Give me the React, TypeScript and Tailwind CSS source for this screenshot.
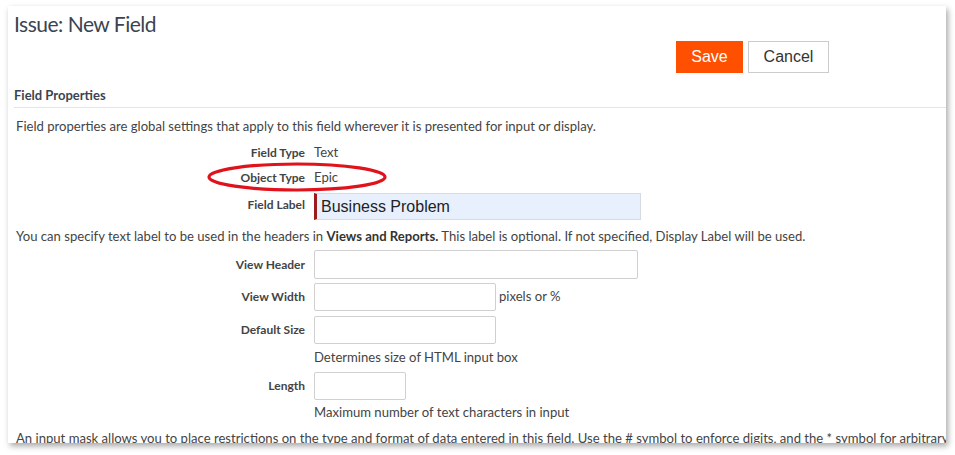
import React from "react";

const lato = { fontFamily: "Lato, 'Open Sans', sans-serif" } as const;

function Label({ children }: { children: React.ReactNode }) {
  return (
    <div className="w-[297px] shrink-0 text-right text-[12px] font-bold text-[#444]">{children}</div>
  );
}

export default function App() {
  return (
    <div className="w-[955px] h-[455px] bg-white overflow-hidden" style={lato}>
      <div className="ml-[8px] mt-[6px] w-[938px] h-[437px] overflow-hidden bg-white shadow-[2px_3px_6px_rgba(0,0,0,0.35)] relative">
        <div className="pl-[6px] pt-[5px] text-[21px] tracking-[-0.5px] leading-[26px] text-[#3b4450]">Issue: New Field</div>
        <div className="flex justify-end gap-[5px] pr-[117px] mt-[4px]">
          <button
            className="w-[67px] h-[32px] bg-[#fe5000] text-white text-[16px]"
            style={{ fontFamily: "'Liberation Sans', Arial, sans-serif" }}
          >
            Save
          </button>
          <button
            className="w-[81px] h-[32px] border border-[#ccc] bg-white text-[#333] text-[16px]"
            style={{ fontFamily: "'Liberation Sans', Arial, sans-serif" }}
          >
            Cancel
          </button>
        </div>
        <div className="ml-[6px] mt-[14px] pb-[4px] border-b border-[#e6e6e6] text-[13px] font-bold text-[#3b4450] leading-[16px]">
          Field Properties
        </div>
        <div className="pl-[8px] mt-[10px] text-[13.1px] text-[#444] leading-[17px]">
          Field properties are global settings that apply to this field wherever it is presented for input or display.
        </div>

        <div className="mt-[9px] flex items-center gap-[9px] h-[17px]">
          <Label>Field Type</Label>
          <div className="text-[13.1px] text-[#444]">Text</div>
        </div>
        <div className="mt-[8px] flex items-center gap-[9px] h-[17px]">
          <Label>Object Type</Label>
          <div className="text-[13.1px] text-[#444]">Epic</div>
        </div>
        <div className="mt-[7px] flex items-start gap-[9px]">
          <div className="pt-[3px]"><Label>Field Label</Label></div>
          <div
            className="w-[327px] h-[27px] bg-[#e8f0fe] border border-[#d5dbe3] border-l-[3px] border-l-[#9b1c1c] pl-[4px] flex items-center text-[16px] text-[#222]"
            style={{ fontFamily: "'Liberation Sans', Arial, sans-serif" }}
          >
            Business Problem
          </div>
        </div>
        <div className="pl-[8px] mt-[8px] text-[13.1px] text-[#444] leading-[17px] whitespace-nowrap">
          You can specify text label to be used in the headers in <b className="font-bold text-[#333]">Views and Reports.</b> This label is optional. If not specified, Display Label will be used.
        </div>

        <div className="mt-[5px] flex items-center gap-[9px]">
          <Label>View Header</Label>
          <div className="w-[324px] h-[29px] border border-[#d0d0d0] rounded-[2px]" />
        </div>
        <div className="mt-[4px] flex items-center gap-[9px]">
          <Label>View Width</Label>
          <div className="w-[182px] h-[28px] border border-[#d0d0d0] rounded-[2px]" />
          <div className="-ml-[6px] text-[13.1px] text-[#444]">pixels or %</div>
        </div>
        <div className="mt-[5px] flex items-center gap-[9px]">
          <Label>Default Size</Label>
          <div className="w-[182px] h-[28px] border border-[#d0d0d0] rounded-[2px]" />
        </div>
        <div className="pl-[306px] mt-[5px] text-[13.1px] text-[#444] leading-[17px]">Determines size of HTML input box</div>
        <div className="mt-[6px] flex items-center gap-[9px]">
          <Label>Length</Label>
          <div className="w-[92px] h-[28px] border border-[#d0d0d0] rounded-[2px]" />
        </div>
        <div className="pl-[306px] mt-[4px] text-[13.1px] text-[#444] leading-[17px]">Maximum number of text characters in input</div>
        <div className="pl-[8px] mt-[9px] text-[13.1px] text-[#444] leading-[17px] whitespace-nowrap">
          An input mask allows you to place restrictions on the type and format of data entered in this field. Use the # symbol to enforce digits, and the * symbol for arbitrary characters.
        </div>

        <svg className="absolute left-[199px] top-[156px]" width="180" height="30" viewBox="0 0 180 30">
          <ellipse cx="90" cy="15" rx="88" ry="13" fill="none" stroke="#e0121b" strokeWidth="3.2" />
        </svg>
      </div>
    </div>
  );
}
